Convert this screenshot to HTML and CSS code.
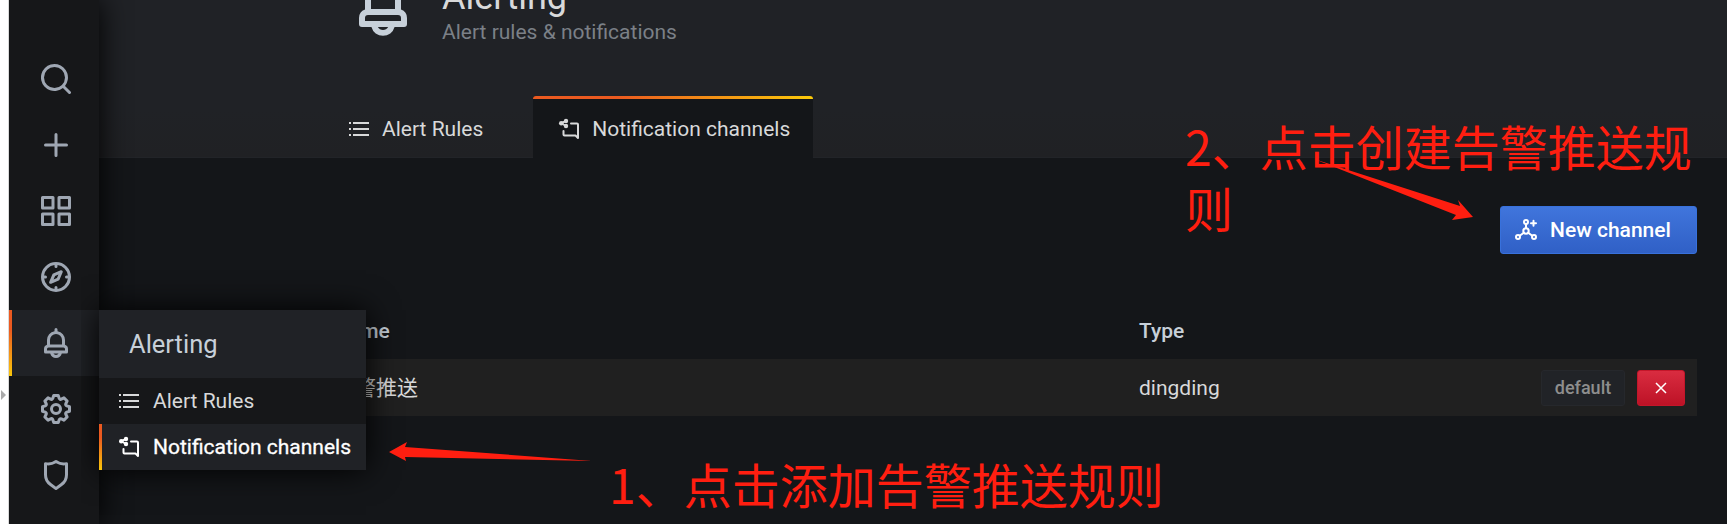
FILE: index.html
```
<!DOCTYPE html>
<html lang="zh">
<head>
<meta charset="utf-8">
<title>Alerting</title>
<link rel="stylesheet" href="styles.css">
</head>
<body>
<svg class="defs" aria-hidden="true">
  <symbol id="bell" viewBox="0 0 24 24"><path d="M18,13.18V10a6,6,0,0,0-5-5.91V3a1,1,0,0,0-2,0V4.09A6,6,0,0,0,6,10v3.18A3,3,0,0,0,4,16v2a1,1,0,0,0,1,1H8.14a4,4,0,0,0,7.72,0H19a1,1,0,0,0,1-1V16A3,3,0,0,0,18,13.18ZM8,10a4,4,0,0,1,8,0v3H8Zm4,10a2,2,0,0,1-1.72-1h3.44A2,2,0,0,1,12,20Zm6-3H6V16a1,1,0,0,1,1-1H17a1,1,0,0,1,1,1Z"/></symbol>
  <symbol id="list" viewBox="0 0 24 24"><path d="M2 5h2v2H2zM2 11h2v2H2zM2 17h2v2H2zM6 5h16v2H6zM6 11h16v2H6zM6 17h16v2H6z"/></symbol>
  <symbol id="share" viewBox="0 0 24 24"><circle cx="4.200" cy="6.200" r="2.200"/><circle cx="9" cy="4" r="2.200"/><circle cx="9" cy="9" r="2.200"/><path class="line" d="M9 4 4.200 6.200 9 9M14 6.500h6a1 1 0 0 1 1 1V21l-2.500-2.500H7.500a1 1 0 0 1-1-1V14"/></symbol>
</svg>
<div class="app">
  <div class="gutter"><i class="handle"></i></div>
  <nav class="side">
    <a class="nav"><svg viewBox="0 0 24 24"><path d="M21.71,20.29,18,16.61A9,9,0,1,0,16.61,18l3.68,3.68a1,1,0,0,0,1.42,0A1,1,0,0,0,21.71,20.29ZM11,18a7,7,0,1,1,7-7A7,7,0,0,1,11,18Z"/></svg></a>
    <a class="nav"><svg viewBox="0 0 24 24"><path d="M19,11H13V5a1,1,0,0,0-2,0v6H5a1,1,0,0,0,0,2h6v6a1,1,0,0,0,2,0V13h6a1,1,0,0,0,0-2Z"/></svg></a>
    <a class="nav"><svg viewBox="0 0 24 24"><path d="M10,13H3a1,1,0,0,0-1,1v7a1,1,0,0,0,1,1h7a1,1,0,0,0,1-1V14A1,1,0,0,0,10,13ZM9,20H4V15H9ZM21,2H14a1,1,0,0,0-1,1v7a1,1,0,0,0,1,1h7a1,1,0,0,0,1-1V3A1,1,0,0,0,21,2ZM20,9H15V4h5Zm1,4H14a1,1,0,0,0-1,1v7a1,1,0,0,0,1,1h7a1,1,0,0,0,1-1V14A1,1,0,0,0,21,13Zm-1,7H15V15h5ZM10,2H3A1,1,0,0,0,2,3v7a1,1,0,0,0,1,1h7a1,1,0,0,0,1-1V3A1,1,0,0,0,10,2ZM9,9H4V4H9Z"/></svg></a>
    <a class="nav"><svg viewBox="0 0 24 24"><path d="M12,2A10,10,0,1,0,22,12,10,10,0,0,0,12,2Zm1,17.93V19a1,1,0,0,0-2,0v.93A8,8,0,0,1,4.07,13H5a1,1,0,0,0,0-2H4.07A8,8,0,0,1,11,4.07V5a1,1,0,0,0,2,0V4.07A8,8,0,0,1,19.93,11H19a1,1,0,0,0,0,2h.93A8,8,0,0,1,13,19.93ZM15.14,7.55l-5,2.12a1,1,0,0,0-.52.52l-2.12,5a1,1,0,0,0,.21,1.1,1,1,0,0,0,.7.29.93.93,0,0,0,.4-.09l5-2.12a1,1,0,0,0,.52-.52l2.12-5a1,1,0,0,0-1.31-1.31Zm-2.49,5.1-2.28,1,1-2.28,2.28-1Z"/></svg></a>
    <a class="nav current"><svg><use href="#bell"/></svg></a>
    <a class="nav"><svg viewBox="0 0 24 24"><path d="M21.32,9.55l-1.89-.63.89-1.78A1,1,0,0,0,20.13,6L18,3.87a1,1,0,0,0-1.15-.19l-1.78.89-.63-1.89A1,1,0,0,0,13.5,2h-3a1,1,0,0,0-.95.68L8.92,4.57,7.14,3.68A1,1,0,0,0,6,3.87L3.87,6a1,1,0,0,0-.19,1.15l.89,1.78-1.89.63A1,1,0,0,0,2,10.5v3a1,1,0,0,0,.68.95l1.89.63-.89,1.78A1,1,0,0,0,3.87,18L6,20.13a1,1,0,0,0,1.15.19l1.78-.89.63,1.89a1,1,0,0,0,.95.68h3a1,1,0,0,0,.95-.68l.63-1.89,1.78.89A1,1,0,0,0,18,20.13L20.13,18a1,1,0,0,0,.19-1.15l-.89-1.78,1.89-.63A1,1,0,0,0,22,13.5v-3A1,1,0,0,0,21.32,9.55ZM20,12.78l-1.2.4A2,2,0,0,0,17.64,16l.57,1.14-1.1,1.1L16,17.64a2,2,0,0,0-2.79,1.16l-.4,1.2H11.22l-.4-1.2A2,2,0,0,0,8,17.64l-1.14.57-1.1-1.1L6.36,16A2,2,0,0,0,5.2,13.18L4,12.78V11.22l1.2-.4A2,2,0,0,0,6.36,8L5.79,6.89l1.1-1.1L8,6.36A2,2,0,0,0,10.82,5.2l.4-1.2h1.56l.4,1.2A2,2,0,0,0,16,6.36l1.14-.57,1.1,1.1L17.64,8a2,2,0,0,0,1.16,2.79l1.2.4ZM12,8a4,4,0,1,0,4,4A4,4,0,0,0,12,8Zm0,6a2,2,0,1,1,2-2A2,2,0,0,1,12,14Z"/></svg></a>
    <a class="nav"><svg viewBox="0 0 24 24"><path d="M19.63,3.65a1,1,0,0,0-.84-.2,8,8,0,0,1-6.22-1.27,1,1,0,0,0-1.14,0A8,8,0,0,1,5.21,3.45a1,1,0,0,0-.84.2A1,1,0,0,0,4,4.43v7.45a9,9,0,0,0,3.77,7.33l3.65,2.6a1,1,0,0,0,1.16,0l3.65-2.6A9,9,0,0,0,20,11.88V4.43A1,1,0,0,0,19.63,3.65ZM18,11.88a7,7,0,0,1-2.93,5.7L12,19.77,8.93,17.58A7,7,0,0,1,6,11.88V5.58a10,10,0,0,0,6-1.39,10,10,0,0,0,6,1.39Z"/></svg></a>
    <div class="flyout">
      <div class="flyout-title">Alerting</div>
      <a class="flyout-item"><svg><use href="#list"/></svg>Alert Rules</a>
      <a class="flyout-item chosen"><svg><use href="#share"/></svg>Notification channels</a>
    </div>
  </nav>
  <main class="main">
    <header class="head">
      <div class="title-row">
        <svg class="head-icon"><use href="#bell"/></svg>
        <div class="titles"><h1>Alerting</h1><p>Alert rules &amp; notifications</p></div>
      </div>
      <div class="tabs">
        <a class="tab"><svg><use href="#list"/></svg>Alert Rules</a>
        <a class="tab active"><svg><use href="#share"/></svg>Notification channels</a>
      </div>
    </header>
    <section class="content">
      <div class="actions">
        <button class="new"><svg viewBox="0 0 24 24"><g class="line"><circle cx="12" cy="4" r="2"/><circle cx="12" cy="13" r="2.700"/><circle cx="4" cy="19" r="2"/><circle cx="20" cy="19" r="2"/><path d="M12 6v4.300M9.800 14.700l-4.100 3M14.200 14.700l4.100 3M19.500 2.800v5M17 5.300h5"/></g></svg>New channel</button>
      </div>
      <div class="row thead"><span>Name</span><span>Type</span></div>
      <div class="row body"><span>告警推送</span><span>dingding</span><span class="tag">default</span><button class="del"><svg viewBox="0 0 12 12"><path d="M1 1l10 10M11 1 1 11"/></svg></button></div>
    </section>
  </main>
  <svg class="arrows" viewBox="0 0 1727 524"><path d="M1314 159 1460 206 1458 200 1473 217 1452 220 1456 215Z"/><path d="M592 461 405 447 407 442 389 452 406 461 405 457Z"/></svg>
  <p class="note note-two">2、点击创建告警推送规则</p>
  <p class="note note-one">1、点击添加告警推送规则</p>
</div>
</body>
</html>
```
FILE: styles.css
```
* { box-sizing: border-box; }
body { margin: 0; background: #141619; color: #d8d9da; font: 21px/30px Roboto, "Noto Sans CJK SC", sans-serif; overflow: hidden; }
h1, p { margin: 0; }
svg { display: block; flex: none; fill: currentColor; }
.defs { position: absolute; width: 0; height: 0; }
.line { fill: none; stroke: currentColor; stroke-width: 2; stroke-linecap: round; stroke-linejoin: round; }
.app { position: relative; display: flex; width: 1727px; height: 524px; overflow: hidden; }
.gutter { position: relative; z-index: 3; display: flex; align-items: center; width: 9px; background: #fff; border-right: 1px solid #d9d9d9; }
.handle { border: 5px solid transparent; border-left-color: #aaa; border-right: 0; margin: 266px 0 0 1px; }
.side { position: relative; z-index: 2; width: 90px; padding-top: 46px; background: #161719; box-shadow: 0 0 30px #000; }
.nav { display: flex; align-items: center; height: 66px; padding-left: 29px; color: #9fa7b3; }
.nav svg { width: 36px; height: 36px; }
.nav.current { background: #202226; border-left: 3px solid; border-image: linear-gradient(#eb5a20 30%, #fbca0a) 1; border-image-width: 0 0 0 3px; padding-left: 26px; }
.flyout { position: absolute; left: 90px; top: 310px; width: 267px; background: #161719; box-shadow: 0 0 30px #000; clip-path: inset(-40px -40px -60px -18px); }
.flyout-title { height: 68px; padding-left: 30px; background: #202226; color: #c7d0d9; font-size: 25.500px; line-height: 68px; }
.flyout-item { display: flex; align-items: center; gap: 12px; height: 46px; padding-left: 18px; white-space: nowrap; }
.flyout-item svg, .tab svg { width: 24px; height: 24px; }
.flyout-item.chosen { background: #202226; border-left: 3px solid; border-image: linear-gradient(#eb5a20 30%, #fbca0a) 1; padding-left: 15px; color: #fff; -webkit-text-stroke: 0.300px #fff; }
.main { flex: 1; display: flex; flex-direction: column; }
.head { display: flex; flex-direction: column; justify-content: space-between; height: 158px; padding-left: 224px; background: linear-gradient(#202226 70%, #202124); border-bottom: 1px solid #222428; }
.title-row { display: flex; height: 48px; margin-top: -30px; }
.head-icon { width: 72px; height: 72px; margin-left: 24px; color: #c7d0d9; }
.titles { margin-left: 23px; }
h1 { font-size: 36px; font-weight: 400; line-height: 42px; margin: 6px 0 -1px; }
.titles p { color: #7b8087; line-height: 30px; }
.tabs { display: flex; height: 62px; margin-bottom: -1px; }
.tab { display: flex; align-items: center; gap: 11px; padding: 3px 24px 0; white-space: nowrap; }
.tab.active { position: relative; width: 280px; margin-left: 26px; background: #141619; border-radius: 3px 3px 0 0; overflow: hidden; }
.tab.active::before { content: ""; position: absolute; inset: 0 0 auto; height: 3px; background: linear-gradient(90deg, #eb5a20 30%, #fbca0a); }
.content { padding: 48px 30px 0 235px; }
.actions { display: flex; justify-content: flex-end; }
button { font: inherit; color: #fff; }
.new { display: flex; align-items: center; gap: 12px; width: 197px; height: 48px; padding: 0 0 0 13px; border: 1px solid #3871dc; border-radius: 3px; background: linear-gradient(#4075dc, #3060c6); font-weight: 500; white-space: nowrap; }
.new svg { width: 24px; height: 24px; }
.row { display: grid; grid-template-columns: 805px 1fr 84px 60px; align-items: center; height: 57px; padding-right: 12px; }
.thead { margin-top: 48px; font-weight: 500; color: #c7d0d9; }
.body { background: #202020; }
.tag { height: 36px; border: 1px solid #26282c; border-radius: 3px; background: #212327; color: #8e8e8e; font-size: 18px; font-weight: 500; line-height: 34px; text-align: center; }
.del { display: grid; place-items: center; height: 36px; margin-left: 12px; border: 1px solid #c4162a; border-radius: 3px; background: linear-gradient(#d92c40, #bd1226); }
.del svg { width: 12px; height: 12px; stroke: #fff; stroke-width: 1.500; }
.arrows { position: absolute; inset: 0; z-index: 3; width: 1727px; height: 524px; fill: #ff1e10; }
.note { position: absolute; z-index: 4; color: #ff1e10; font: 400 48px/62px "Noto Sans CJK SC", sans-serif; }
.note-two { left: 1185px; top: 114px; width: 520px; }
.note-one { left: 609px; top: 452px; white-space: nowrap; }
```
